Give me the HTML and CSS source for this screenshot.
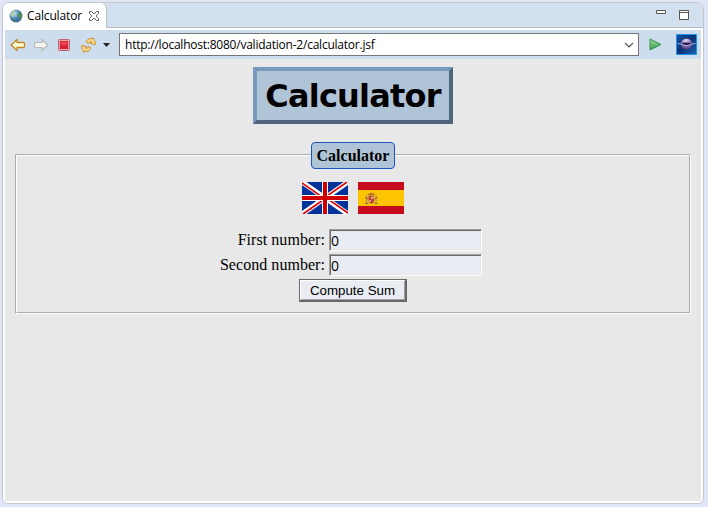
FILE: index.html
```html
<!DOCTYPE html>
<html lang="en">
<head>
<meta charset="utf-8">
<title>Calculator</title>
<link rel="stylesheet" href="styles.css">
</head>
<body>
<div class="window">
  <header class="tabs">
    <div class="tab">
      <svg class="globe" width="14" height="14" viewBox="0 0 14 14">
        <defs><radialGradient id="sea" cx=".35" cy=".3"><stop offset="0" stop-color="#d3e8f3"/><stop offset=".6" stop-color="#6aa0c8"/><stop offset="1" stop-color="#3c7099"/></radialGradient></defs>
        <circle cx="7" cy="7" r="6.4" fill="url(#sea)"/>
        <path d="M1.500 5l2-2.500 2.500-.5.500 1.500-2 1.500.5 2-1.500 1-1.500-1z" fill="#b2cfa0"/>
        <path d="M8.500 5l2.500-1.500 1.500 1.500.2 3-2 2.500-.7-3-1.500-1z" fill="#4b8f50"/>
        <path d="M4.500 9l2 1-.5 2-1.500-1z" fill="#438e67"/>
      </svg>
      <span class="tab-name">Calculator</span>
      <svg class="close" width="12" height="12" viewBox="0 0 12 12"><path d="M1.500 1.500h2L6 4l2.500-2.500h2v2L8 6l2.500 2.500v2h-2L6 8l-2.500 2.500h-2v-2L4 6 1.500 3.500z" fill="#fff" stroke="#666" stroke-width="1"/></svg>
    </div>
    <div class="controls">
      <svg width="10" height="4" viewBox="0 0 10 4"><path d="M.5.5h9v3h-9z" fill="#fff" stroke="#555"/></svg>
      <svg width="10" height="10" viewBox="0 0 10 10"><path d="M.5.5h9v9h-9zM.5 2.500h9" fill="#fff" stroke="#555"/></svg>
    </div>
  </header>
  <main class="browser">
    <nav class="toolbar">
      <svg class="back" width="16" height="14" viewBox="0 0 16 14"><path d="M1.200 7L7 1.500v3h6.500q1 0 1 1v3q0 1-1 1H7v3z" fill="#fffbd7" stroke="#c18a22" stroke-width="1.300" stroke-linejoin="round"/></svg>
      <svg class="forward" width="16" height="14" viewBox="0 0 16 14"><path d="M14.800 7L9 1.500v3H2.500q-1 0-1 1v3q0 1 1 1H9v3z" fill="#f4f4f3" stroke="#b7b7b7" stroke-width="1.200" stroke-linejoin="round"/></svg>
      <svg class="stop" width="12" height="12" viewBox="0 0 12 12"><rect x=".5" y=".5" width="11" height="11" rx="1" fill="#e8a9af" stroke="#c65f6d"/><path d="M2 2h8v8H2z" fill="#d91f36"/><path d="M3 3h6v3H3z" fill="#ea4657"/></svg>
      <svg class="refresh" width="15" height="16" viewBox="0 0 15 16"><g fill="#f9d987" stroke="#c28a2a" stroke-width=".9" stroke-linejoin="round"><path d="M5.500 5.500C5.500 2.500 8 1 11 1.700L12.500.7l.2 2 1.600 1.600-.2 3.500-5-1.600 1.600-1.300C9 4.200 8 5 7.800 6.500z"/><path d="M9.500 10.500c0 3-2.500 4.500-5.500 3.800l-1.500 1-.2-2-1.600-1.600.2-3.500 5 1.600-1.600 1.300C6 11.800 7 11 7.200 9.500z"/></g></svg>
      <svg class="arrow" width="7" height="4" viewBox="0 0 7 4"><path d="M0 0h7L3.500 4z" fill="#222"/></svg>
      <div class="address">
        <span class="url">http://localhost:8080/validation-2/calculator.jsf</span>
        <svg width="10" height="6" viewBox="0 0 10 6"><path d="M1 1l4 4 4-4" fill="none" stroke="#555" stroke-width="1.200"/></svg>
      </div>
      <svg class="go" width="13" height="13" viewBox="0 0 13 13"><defs><linearGradient id="play" x2="0" y2="1"><stop stop-color="#a5d8a0"/><stop offset="1" stop-color="#2c9c49"/></linearGradient></defs><path d="M1 1l11 5.500L1 12z" fill="url(#play)" stroke="#359150" stroke-linejoin="round"/></svg>
      <svg class="brand" width="21" height="21" viewBox="0 0 21 21">
        <defs><linearGradient id="sky" x2="1" y2="1"><stop stop-color="#10579f"/><stop offset=".5" stop-color="#0c3077"/><stop offset="1" stop-color="#1768bb"/></linearGradient><radialGradient id="orb" cx=".45" cy=".2" r=".8"><stop stop-color="#e5d9ee"/><stop offset=".5" stop-color="#9078b5"/><stop offset="1" stop-color="#4a3a85"/></radialGradient></defs>
        <path d="M.5.5h20v20H.5z" fill="url(#sky)" stroke="#1993e7"/>
        <circle cx="10.500" cy="10" r="5.600" fill="url(#orb)"/><ellipse cx="10.500" cy="9.800" rx="4.500" ry="1.300" fill="#291d58"/>
        <path d="M1.500 9.500l4 .6M15.500 10.100l4-.6M5.500 10.500q5 2.500 10 0" fill="none" stroke="#b4bfe6" stroke-width=".9"/>
      </svg>
    </nav>
    <section class="page">
      <h1 class="title"><span>Calculator</span></h1>
      <fieldset class="panel">
        <legend class="legend">Calculator</legend>
        <div class="flags">
          <svg width="46" height="32" viewBox="0 0 46 32">
            <path d="M0 0h46v32H0z" fill="#003399"/>
            <path d="M0 0l46 32M46 0L0 32" stroke="#fff" stroke-width="5"/>
            <path d="M0 1l21 14.600M46 31L25 16.400M45 0L24 14.600M1 32l21-14.600" stroke="#d00" stroke-width="1.700"/>
            <path d="M23 0v32M0 16h46" stroke="#fff" stroke-width="6"/>
            <path d="M23 0v32M0 16h46" stroke="#d00000" stroke-width="4"/>
          </svg>
          <svg width="46" height="32" viewBox="0 0 46 32">
            <path d="M0 0h46v32H0z" fill="#c60b1e"/><path d="M0 8h46v16H0z" fill="#ffc400"/>
            <path d="M10.500 14h5.500v5q0 2.500-2.700 2.500T10.500 19z" fill="#b8433c"/>
            <path d="M13 14.500h2.500V17H13zM11 18h2v2h-2z" fill="#dba77b"/>
            <path d="M10.500 13.500l-1-2 2 .2 1.700-1.200 1.800 1.200 2-.2-1 2z" fill="#b96b27"/>
            <path d="M8.500 13v8M18 13v8" stroke="#a3917e" stroke-width="1.200"/>
            <path d="M7 15.500l3 1.500M16.500 17l3-1.500" stroke="#bc4630"/>
            <path d="M7 21.500h3M16.500 21.500h3" stroke="#8b6c4d"/>
          </svg>
        </div>
        <form class="form">
          <label class="label" for="first">First number:</label><input class="field" id="first" value="0">
          <label class="label" for="second">Second number:</label><input class="field" id="second" value="0">
        </form>
        <button class="submit" type="button">Compute Sum</button>
      </fieldset>
    </section>
  </main>
</div>
</body>
</html>
```
FILE: styles.css
```css
* { box-sizing: border-box; }
body { margin: 0; padding: 2px 4px 3px 2px; height: 507px; overflow: hidden; background: #e1e6f6; }
svg { display: block; flex: none; }
.window { width: 702px; height: 502px; border: 1px solid #c3c6cd; border-radius: 7px 7px 6px 6px; background: #fff; overflow: hidden; }
.tabs { height: 25px; display: flex; justify-content: space-between; background: #d2e0ef; border-bottom: 1px solid #b5becb; }
.tab { width: 104px; height: 25px; padding: 0 6px 0 5px; display: flex; align-items: center; background: #fff; border-right: 1px solid #b5becb; border-radius: 0 6px 0 0; font: 12px "Open Sans", sans-serif; }
.globe { margin: 1px 0 0 1px; }
.tab-name { width: 55px; margin: -1px 0 0 4px; letter-spacing: -.15px; white-space: nowrap; }
.close { margin: 1px 0 0 6px; }
.controls { display: flex; gap: 13px; padding: 7px 14px 0 0; }
.browser { height: 475px; padding: 2px 2px 2px; display: flex; flex-direction: column; }
.toolbar { height: 29px; flex: none; display: flex; align-items: center; padding-left: 5px; background: #cedded; }
.forward { margin-left: 7px; }
.stop { margin-left: 9px; }
.refresh { margin-left: 11px; }
.arrow { margin-left: 7px; }
.address { width: 520px; height: 23px; margin-left: 9px; padding: 0 4px 0 5px; border: 1px solid #777; background: #fff; display: flex; align-items: center; justify-content: space-between; font: 12px "Open Sans", sans-serif; }
.url { letter-spacing: -.23px; white-space: nowrap; }
.go { margin-left: 10px; }
.brand { margin-left: 14px; }
.page { flex: 1; min-height: 0; padding: 8px 10px; background: #e8e8e8; font: 16px "Liberation Serif", serif; color: #000; }
.title { width: 200px; height: 57px; margin: 0 auto 17px; border: 4px solid; border-color: #759abb #50657d #50657d #759abb; background: #b0c4d8; display: flex; align-items: center; justify-content: center; padding-top: 1px; font: bold 32px "DejaVu Sans", sans-serif; letter-spacing: -.8px; }
.panel { height: 173px; margin: 0; padding: 14px 0 0; border: 2px groove #fff; }
.legend { position: relative; top: 1px; width: 84px; height: 27px; margin: 0 auto; padding: 0; border: 1px solid #1c55c0; border-radius: 4px; background: #b0c4d8; font-weight: bold; line-height: 26px; text-align: center; }
.flags { display: flex; justify-content: center; gap: 10px; }
.form { width: 267px; margin: 15px 0 0 200px; display: grid; grid-template-columns: 108px 153px; grid-template-rows: 22px 22px; column-gap: 4px; row-gap: 3px; }
.label { line-height: 22px; text-align: right; white-space: nowrap; letter-spacing: .05px; }
.field { width: 153px; height: 22px; padding: 0 1px; border: 1px solid; border-color: #a0a0a0 #fff #fff #a0a0a0; box-shadow: inset 1px 1px #696969, inset -1px -1px #e3e3e3; border-radius: 0; background: #eaecf3; font: 14px "Open Sans", sans-serif; letter-spacing: -.3px; }
.submit { display: block; margin: 3px auto 0; width: 108px; height: 23px; padding: 0; border: 1px solid #696969; border-right-width: 2px; border-bottom-width: 2px; border-radius: 0; box-shadow: inset 1px 1px #fff, inset -1px -1px #a0a0a0; background: #eaecf3; font: 13.3px "Liberation Sans", sans-serif; }
```
